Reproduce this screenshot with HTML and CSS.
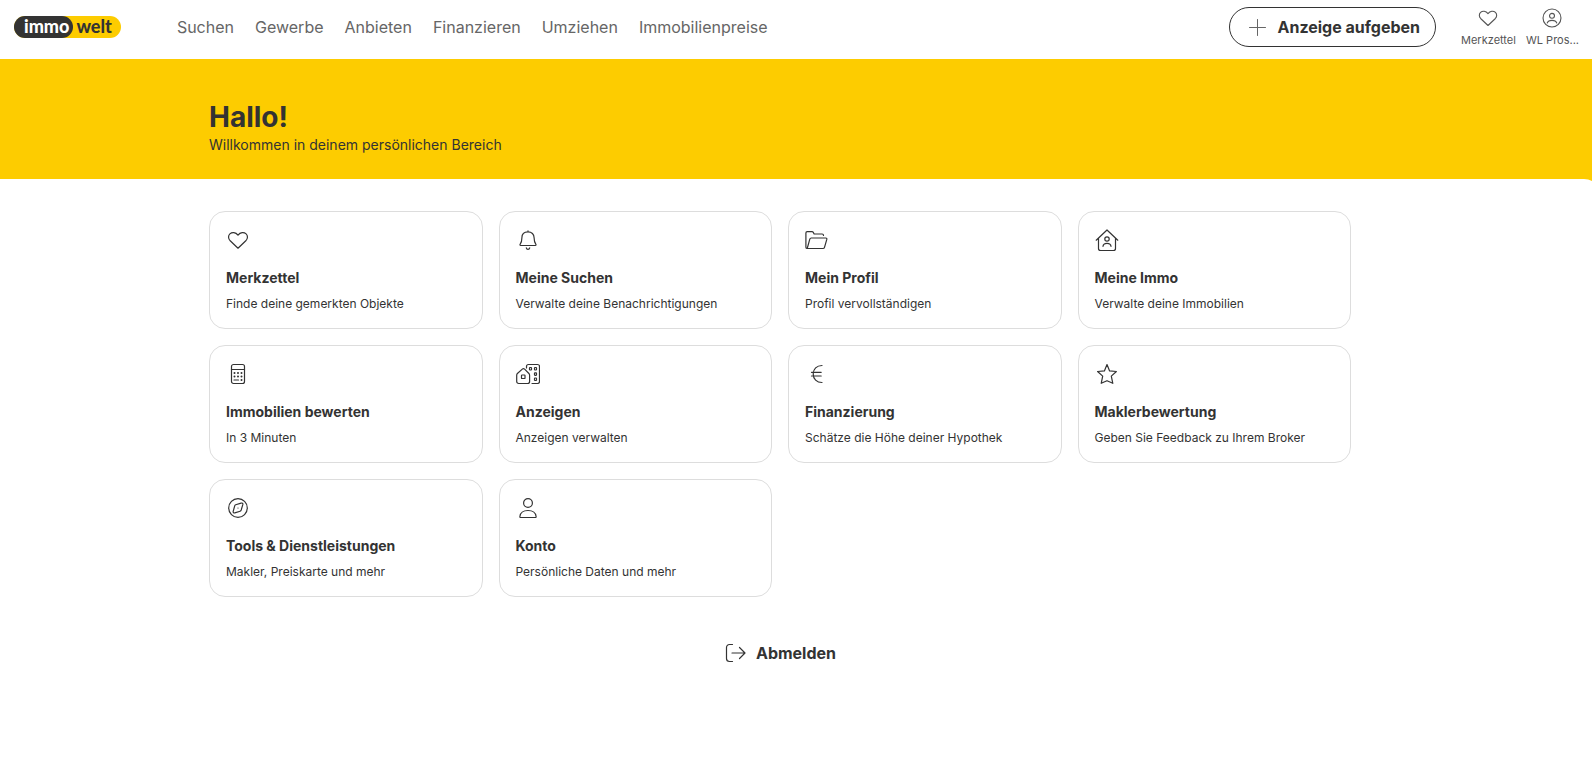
FILE: index.html
```
<!DOCTYPE html>
<html lang="de">
<head>
<meta charset="utf-8">
<meta name="viewport" content="width=device-width, initial-scale=1">
<title>immowelt</title>
<link rel="stylesheet" href="styles.css">
</head>
<body>
<header class="header">
  <a class="logo" href="#" aria-label="immowelt"><span class="logo-dark">immo</span><span class="logo-light">welt</span></a>
  <nav class="nav">
    <a href="#">Suchen</a>
    <a href="#">Gewerbe</a>
    <a href="#">Anbieten</a>
    <a href="#">Finanzieren</a>
    <a href="#">Umziehen</a>
    <a href="#">Immobilienpreise</a>
  </nav>
  <button class="post" type="button">
    <svg class="icon thin" viewBox="0 0 24 24"><path d="M12.5 4.5v16M4.500 12.500h16"/></svg>
    Anzeige aufgeben
  </button>
  <div class="tools">
    <a class="tool" href="#">
      <svg class="icon" viewBox="0 0 24 24"><path d="M12 20.200 4.200 12.800C2.100 10.700 2 7.700 3.900 5.900 6.100 3.900 9.600 4.100 12 7.200c2.400-3.100 5.900-3.300 8.100-1.300 1.900 1.800 1.800 4.800-.3 6.900z"/></svg>
      <span class="tool-label">Merkzettel</span>
    </a>
    <a class="tool" href="#">
      <svg class="icon" viewBox="0 0 24 24"><circle cx="12" cy="12" r="9.800"/><circle cx="12" cy="9.600" r="2.700"/><path d="M6.800 17.500c.7-2 2.500-2.900 5.200-2.900s4.500.9 5.200 2.900"/></svg>
      <span class="tool-label">WL Pros...</span>
    </a>
  </div>
</header>
<main class="main">
  <section class="hero">
    <div class="container">
      <h1 class="hero-title">Hallo!</h1>
      <p class="hero-text">Willkommen in deinem persönlichen Bereich</p>
    </div>
  </section>
  <section class="panel">
    <div class="container">
      <div class="cards">
        <a class="card" href="#">
          <svg class="icon" viewBox="0 0 24 24"><path d="M12 20.200 4.200 12.800C2.100 10.700 2 7.700 3.900 5.900 6.100 3.900 9.600 4.100 12 7.200c2.400-3.100 5.900-3.300 8.100-1.300 1.900 1.800 1.800 4.800-.3 6.900z"/></svg>
          <h2 class="card-title">Merkzettel</h2>
          <p class="card-text">Finde deine gemerkten Objekte</p>
        </a>
        <a class="card" href="#">
          <svg class="icon" viewBox="0 0 24 24"><path d="M12 2.800v1.100M4.600 17.500h14.800c.6 0 .8-.6.5-1.100-1.300-1.700-1.800-3.700-1.800-6.600 0-3.700-2.400-5.900-6.100-5.900S5.900 6.100 5.900 9.800c0 2.900-.5 4.900-1.800 6.600-.3.500-.1 1.100.5 1.100zM10.300 19.800c.2 1 .8 1.500 1.700 1.500s1.500-.5 1.700-1.500"/></svg>
          <h2 class="card-title">Meine Suchen</h2>
          <p class="card-text">Verwalte deine Benachrichtigungen</p>
        </a>
        <a class="card" href="#">
          <svg class="icon" viewBox="0 0 24 24"><path d="M2.200 20.500h15.800c.8 0 1.300-.4 1.500-1.100l2.300-8c.2-.8-.2-1.400-1-1.400H6.200c-.8 0-1.200.4-1.400 1.100L2.200 20.500c-.8 0-1.300-.6-1.300-1.300V5c0-.8.500-1.400 1.300-1.400h4.700c.8 0 1.200.4 1.500 1L9.100 6h8c.8 0 1.400.6 1.400 1.400"/></svg>
          <h2 class="card-title">Mein Profil</h2>
          <p class="card-text">Profil vervollständigen</p>
        </a>
        <a class="card" href="#">
          <svg class="icon" viewBox="0 0 24 24"><path d="M1.200 12.200 12 2l10.800 10.200M3.500 10.300v10.200c0 1.200.8 2 2 2h13c1.200 0 2-.8 2-2V10.300"/><circle cx="12" cy="11" r="2.200"/><path d="M8 18.300c.2-2 1.500-3 4-3s3.800 1 4 3"/></svg>
          <h2 class="card-title">Meine Immo</h2>
          <p class="card-text">Verwalte deine Immobilien</p>
        </a>
        <a class="card" href="#">
          <svg class="icon" viewBox="0 0 24 24"><rect x="5.500" y="2.500" width="13" height="19" rx="2"/><path d="M5.500 7.500h13"/><path class="dots" d="M8.500 11h0M12 11h0M15.500 11h0M8.500 14.500h0M12 14.500h0M15.500 14.500h0M15.500 18h0"/><path d="M8 18h4.500"/></svg>
          <h2 class="card-title">Immobilien bewerten</h2>
          <p class="card-text">In 3 Minuten</p>
        </a>
        <a class="card" href="#">
          <svg class="icon" viewBox="0 0 24 24"><path d="M.7 13.200c0-.8.200-1.200.7-1.700l4.900-4.400c.8-.7 1.500-.7 2.300 0l4.300 4.400c.5.500.7 1 .7 1.700v6.300c0 1.200-.8 2-2 2H2.700c-1.200 0-2-.8-2-2zM10.500 6V4.500c0-1.200.8-2 2-2h9c1.200 0 2 .8 2 2v15c0 1.200-.8 2-2 2H16"/><rect x="5.500" y="13" width="3.500" height="3.500" rx=".6"/><rect x="13.500" y="5.500" width="2" height="2.500" rx=".5"/><rect x="18.500" y="5.500" width="2" height="2.500" rx=".5"/><rect x="18.500" y="10.800" width="2" height="2.500" rx=".5"/><rect x="18.500" y="16" width="2" height="2.500" rx=".5"/></svg>
          <h2 class="card-title">Anzeigen</h2>
          <p class="card-text">Anzeigen verwalten</p>
        </a>
        <a class="card" href="#">
          <svg class="icon" viewBox="0 0 24 24"><path d="M17 3.500c-5.300 0-8.800 3.500-8.800 8.500s3.500 8.500 8.800 8.500M6.500 10.300h9.700M6.500 14h9.700"/></svg>
          <h2 class="card-title">Finanzierung</h2>
          <p class="card-text">Schätze die Höhe deiner Hypothek</p>
        </a>
        <a class="card" href="#">
          <svg class="icon" viewBox="0 0 24 24"><path d="m12 2.600 2.600 6.300 6.800.6-5.100 4.600 1.500 7.200L12 18.700l-5.800 2.600 1.500-7.200-5.100-4.600 6.800-.6z"/></svg>
          <h2 class="card-title">Maklerbewertung</h2>
          <p class="card-text">Geben Sie Feedback zu Ihrem Broker</p>
        </a>
        <a class="card" href="#">
          <svg class="icon" viewBox="0 0 24 24"><circle cx="12" cy="12" r="9.300"/><path d="m9.700 8.800 5.400-1.700c1.200-.4 2 .4 1.700 1.600l-1.600 5.300c-.2.600-.5 1-1.100 1.200l-5.300 1.700c-1.200.4-1.900-.4-1.600-1.600l1.500-5.400c.2-.6.500-.9 1-1.100z"/><path d="M12 12h0"/></svg>
          <h2 class="card-title">Tools &amp; Dienstleistungen</h2>
          <p class="card-text">Makler, Preiskarte und mehr</p>
        </a>
        <a class="card" href="#">
          <svg class="icon" viewBox="0 0 24 24"><circle cx="12" cy="7" r="4.400"/><path d="M4.500 21.500h15c.5 0 .7-.4.6-1-.5-4-3.300-6-8.100-6s-7.600 2-8.100 6c-.1.600.1 1 .6 1z"/></svg>
          <h2 class="card-title">Konto</h2>
          <p class="card-text">Persönliche Daten und mehr</p>
        </a>
      </div>
      <button class="logout" type="button">
        <svg class="icon" viewBox="0 0 24 24"><path d="M8.500 3.500h-3c-1.800 0-3 1.200-3 3v11c0 1.800 1.200 3 3 3h3"/><path d="M8 12h13M15.500 6.500 21 12l-5.500 5.500"/></svg>
        Abmelden
      </button>
    </div>
  </section>
</main>
</body>
</html>
```
FILE: styles.css
```
* {
  box-sizing: border-box;
}

body {
  margin: 0;
  background: #fff;
  color: #333;
  font-family: Inter, "Liberation Sans", sans-serif;
}

a {
  color: inherit;
  text-decoration: none;
}

button {
  border: 0;
  background: none;
  color: inherit;
  font-family: inherit;
  font-size: 16px;
  font-weight: 700;
  line-height: 24px;
  cursor: pointer;
}

h1,
h2,
p {
  margin: 0;
}

.icon {
  display: block;
  flex: none;
  width: 24px;
  height: 24px;
  fill: none;
  stroke: currentColor;
  stroke-width: 1.2;
  stroke-linecap: round;
  stroke-linejoin: round;
}

.icon .dots {
  stroke-width: 2;
}

.header {
  display: flex;
  align-items: flex-start;
  height: 59px;
  padding: 7px 13px 0 14px;
}

.logo {
  display: flex;
  height: 22px;
  margin: 9px 56px 0 0;
  border-radius: 11px;
  background: #fdcc00;
  font-family: Lato, sans-serif;
  font-size: 18px;
  font-weight: 900;
  line-height: 20px;
}

.logo-dark {
  padding: 0 4px 0 10px;
  border-radius: 11px;
  background: #333;
  color: #fff;
}

.logo-light {
  padding: 0 9px 0 3px;
}

.nav {
  display: flex;
  gap: 21px;
  margin-top: 8px;
  color: #666;
  font-size: 16px;
  line-height: 24px;
}

.post {
  display: flex;
  align-items: center;
  gap: 8px;
  height: 40px;
  margin-left: auto;
  padding: 0 15px;
  border: 1px solid #333;
  border-radius: 20px;
}

.thin {
  stroke: #666;
  stroke-width: 1;
}

.tools {
  display: flex;
  gap: 10px;
  margin-left: 25px;
  color: #555;
}

.tool {
  display: flex;
  flex-direction: column;
  align-items: center;
}

.tool .icon {
  width: 22px;
  height: 22px;
}

.tool-label {
  margin-top: 4px;
  font-size: 11px;
  line-height: 14px;
}

.main {
  overflow: hidden;
  background: #fdcc00;
}

.hero {
  padding: 41px 32px 24px 0;
}

.container {
  max-width: 1142px;
  margin: 0 auto;
}

.hero-title {
  font-size: 28px;
  line-height: 35px;
}

.hero-text {
  font-size: 14px;
  line-height: 20px;
}

.panel {
  min-height: calc(100vh - 179px);
  margin-right: -8px;
  padding: 32px 40px 32px 0;
  border-top-right-radius: 16px;
  background: #fff;
}

.cards {
  display: grid;
  grid-template-columns: repeat(4, 1fr);
  gap: 16px;
}

.card {
  padding: 16px;
  border: 1px solid #ddd;
  border-radius: 16px;
}

.card-title {
  margin-top: 16px;
  font-size: 14px;
  line-height: 20px;
}

.card-text {
  margin-top: 8px;
  font-size: 12px;
  line-height: 16px;
}

.logout {
  display: flex;
  align-items: center;
  gap: 8px;
  margin: 44px auto 0;
  padding: 0;
}
```
